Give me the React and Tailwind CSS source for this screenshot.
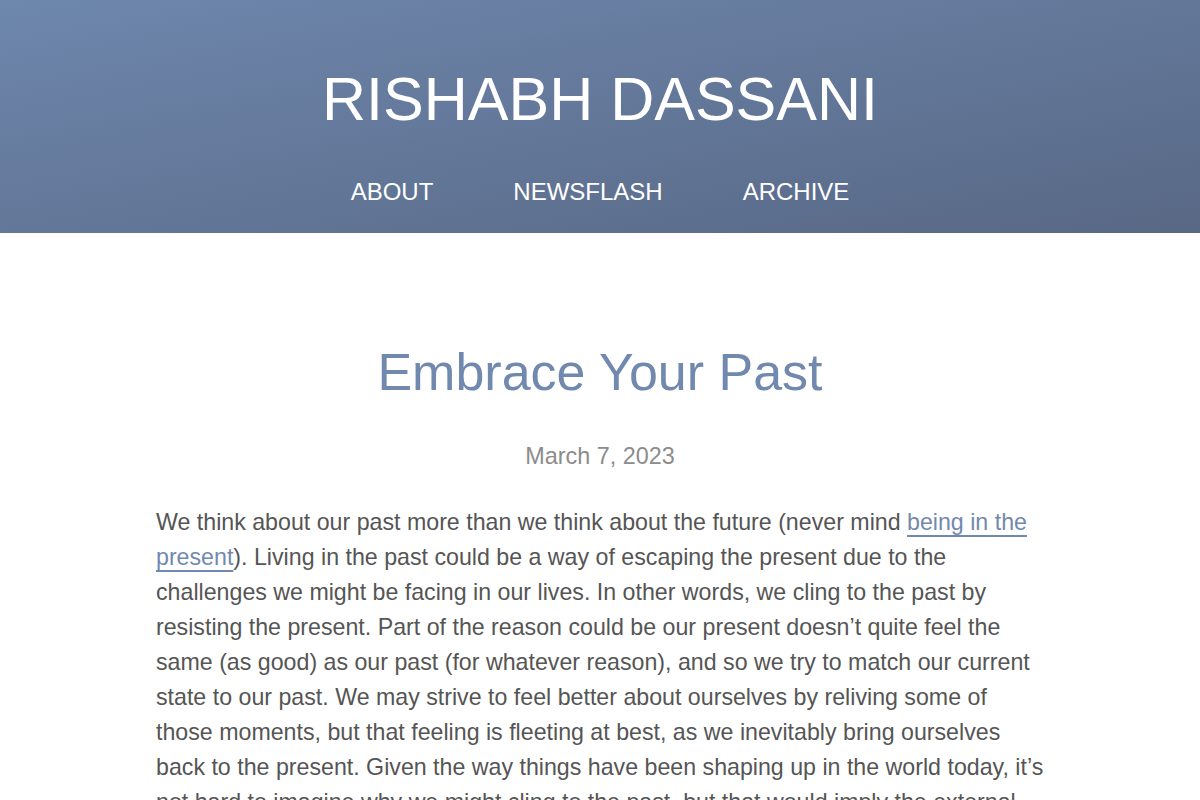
import React from "react";

const links = ["ABOUT", "NEWSFLASH", "ARCHIVE"];

export default function App() {
  return (
    <div className="min-h-screen bg-white font-['Liberation_Sans',Arial,sans-serif]">
      {/* masthead */}
      <header className="h-[233px] bg-gradient-to-br from-[#6e87ad] to-[#586885] flex flex-col items-center text-white">
        <h1 className="mt-[64px] text-[61px] leading-[70px]">RISHABH DASSANI</h1>
        <nav className="mt-[44px] flex gap-[80px] text-[24px] leading-[28px]">
          {links.map((l) => (
            <a key={l} href="#">{l}</a>
          ))}
        </nav>
      </header>

      <main className="max-w-[888px] mx-auto pt-[109px]">
        <h2 className="text-center text-[52px] leading-[60px] text-[#7189ae]">Embrace Your Past</h2>
        <p className="mt-[40px] text-center text-[23.4px] leading-[28px] text-[#8c8c8c]">March 7, 2023</p>
        <p className="mt-[35px] text-[23.2px] leading-[35px] text-[#555555]">
          We think about our past more than we think about the future (never mind{" "}
          <a href="#" className="text-[#7189ae] underline decoration-2 underline-offset-[5px]">being in the present</a>).
          Living in the past could be a way of escaping the present due to the challenges we might be facing in
          our lives. In other words, we cling to the past by resisting the present. Part of the reason could be
          our present doesn’t quite feel the same (as good) as our past (for whatever reason), and so we try to
          match our current state to our past. We may strive to feel better about ourselves by reliving some of
          those moments, but that feeling is fleeting at best, as we inevitably bring ourselves back to the
          present. Given the way things have been shaping up in the world today, it’s not hard to imagine why we
          might cling to the past, but that would imply the external world dictates how we feel inside.
        </p>
      </main>
    </div>
  );
}
